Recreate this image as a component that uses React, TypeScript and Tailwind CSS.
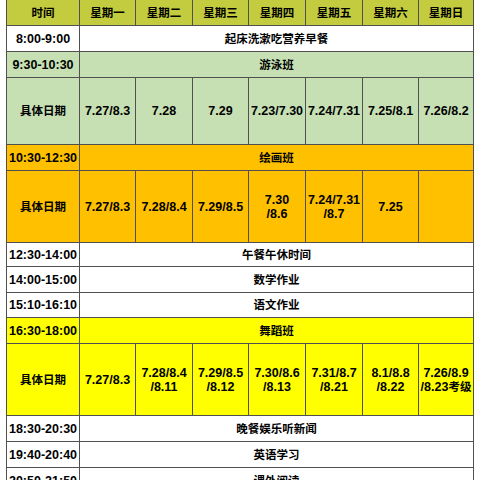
import { FC, ReactNode } from 'react';

const days = ['星期一', '星期二', '星期三', '星期四', '星期五', '星期六', '星期日'];

type Row =
  | { kind: 'span'; time: string; text: string; bg: string; h: string }
  | { kind: 'dates'; dates: ReactNode[]; bg: string; h: string };

const swimDates = ['7.27/8.3', '7.28', '7.29', '7.23/7.30', '7.24/7.31', '7.25/8.1', '7.26/8.2'];
const paintDates: ReactNode[] = [
  '7.27/8.3',
  '7.28/8.4',
  '7.29/8.5',
  <>7.30<br />/8.6</>,
  <>7.24/7.31<br />/8.7</>,
  '7.25',
  '',
];
const danceDates: ReactNode[] = [
  '7.27/8.3',
  <>7.28/8.4<br />/8.11</>,
  <>7.29/8.5<br />/8.12</>,
  <>7.30/8.6<br />/8.13</>,
  <>7.31/8.7<br />/8.21</>,
  <>8.1/8.8<br />/8.22</>,
  <>7.26/8.9<br />/8.23<span className="text-[11.5px]">考级</span></>,
];

const rows: Row[] = [
  { kind: 'span', time: '8:00-9:00', text: '起床洗漱吃营养早餐', bg: 'bg-white', h: 'h-[25px]' },
  { kind: 'span', time: '9:30-10:30', text: '游泳班', bg: 'bg-[#c6e0b4]', h: 'h-[25px]' },
  { kind: 'dates', dates: swimDates, bg: 'bg-[#c6e0b4]', h: 'h-[66px]' },
  { kind: 'span', time: '10:30-12:30', text: '绘画班', bg: 'bg-[#ffc000]', h: 'h-[25px]' },
  { kind: 'dates', dates: paintDates, bg: 'bg-[#ffc000]', h: 'h-[71px]' },
  { kind: 'span', time: '12:30-14:00', text: '午餐午休时间', bg: 'bg-white', h: 'h-[23px]' },
  { kind: 'span', time: '14:00-15:00', text: '数学作业', bg: 'bg-white', h: 'h-[25px]' },
  { kind: 'span', time: '15:10-16:10', text: '语文作业', bg: 'bg-white', h: 'h-[24px]' },
  { kind: 'span', time: '16:30-18:00', text: '舞蹈班', bg: 'bg-[#ffff00]', h: 'h-[25px]' },
  { kind: 'dates', dates: danceDates, bg: 'bg-[#ffff00]', h: 'h-[71px]' },
  { kind: 'span', time: '18:30-20:30', text: '晚餐娱乐听新闻', bg: 'bg-white', h: 'h-[25px]' },
  { kind: 'span', time: '19:40-20:40', text: '英语学习', bg: 'bg-white', h: 'h-[25px]' },
  { kind: 'span', time: '20:50-21:50', text: '课外阅读', bg: 'bg-white', h: 'h-[25px]' },
];

const Cell: FC<{ className?: string; children?: ReactNode }> = ({ className = '', children }) => (
  <div className={`flex items-center justify-center text-center leading-[14px] ${className}`}>
    <div>{children}</div>
  </div>
);

const App: FC = () => {
  return (
    <div
      className="w-[480px] h-[480px] overflow-hidden bg-white text-black font-bold text-[12.5px]"
      style={{ fontFamily: '"Liberation Sans", "Noto Sans CJK SC", sans-serif' }}
    >
      <div className="ml-[6px] mt-[-1px] w-fit bg-[#505050] p-px grid gap-px grid-cols-[72px_55px_56px_55px_56px_56px_55px_54px]">
        {/* Header */}
        <Cell className="h-[25px] bg-[#c3cc3e] text-[11.5px]">时间</Cell>
        {days.map((d) => (
          <Cell key={d} className="h-[25px] bg-[#c3cc3e] text-[11.5px]">
            {d}
          </Cell>
        ))}

        {rows.map((r, i) =>
          r.kind === 'span' ? (
            <div key={i} className="contents">
              <Cell className={`${r.h} ${r.bg} whitespace-nowrap`}>{r.time}</Cell>
              <Cell className={`${r.h} ${r.bg} col-span-7 text-[11.5px]`}>{r.text}</Cell>
            </div>
          ) : (
            <div key={i} className="contents">
              <Cell className={`${r.h} ${r.bg} text-[11.5px]`}>具体日期</Cell>
              {r.dates.map((d, j) => (
                <Cell key={j} className={`${r.h} ${r.bg} whitespace-nowrap`}>
                  {d}
                </Cell>
              ))}
            </div>
          )
        )}
      </div>
    </div>
  );
};

export default App;
